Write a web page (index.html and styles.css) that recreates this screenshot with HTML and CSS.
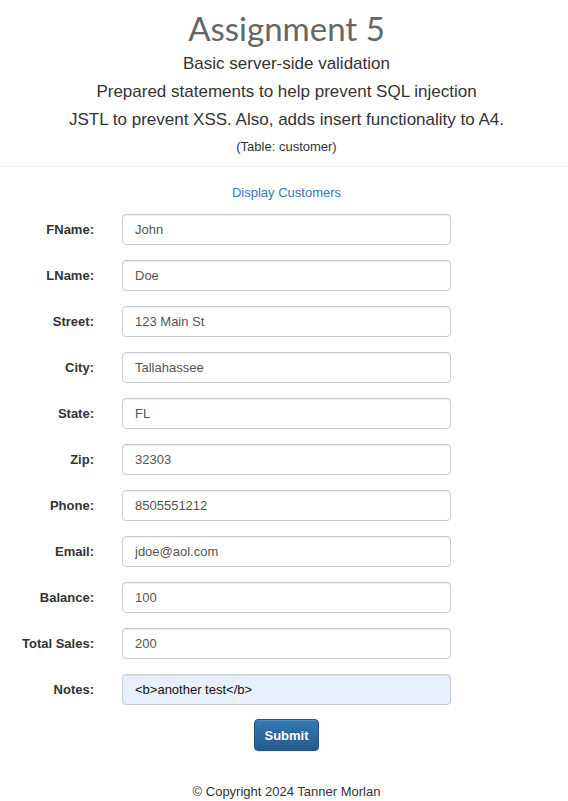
FILE: index.html
```html
<!DOCTYPE html>
<html lang="en">
<head>
<meta charset="utf-8">
<title>Assignment 5</title>
<link rel="stylesheet" href="styles.css">
</head>
<body>
<header class="header">
  <h1 class="title">Assignment 5</h1>
  <p class="sub">Basic server-side validation</p>
  <p class="sub">Prepared statements to help prevent SQL injection</p>
  <p class="sub">JSTL to prevent XSS. Also, adds insert functionality to A4.</p>
  <p class="table-note">(Table: customer)</p>
</header>
<hr class="divider">
<main class="main">
  <div class="link-row"><a class="link" href="#">Display Customers</a></div>
  <form class="form">
    <label class="lbl">FName:</label><input class="field" type="text" value="John">
    <label class="lbl">LName:</label><input class="field" type="text" value="Doe">
    <label class="lbl">Street:</label><input class="field" type="text" value="123 Main St">
    <label class="lbl">City:</label><input class="field" type="text" value="Tallahassee">
    <label class="lbl">State:</label><input class="field" type="text" value="FL">
    <label class="lbl">Zip:</label><input class="field" type="text" value="32303">
    <label class="lbl">Phone:</label><input class="field" type="text" value="8505551212">
    <label class="lbl">Email:</label><input class="field" type="text" value="jdoe@aol.com">
    <label class="lbl">Balance:</label><input class="field" type="text" value="100">
    <label class="lbl">Total Sales:</label><input class="field" type="text" value="200">
    <label class="lbl">Notes:</label><input class="field autofill" type="text" value="&lt;b&gt;another test&lt;/b&gt;">
  </form>
  <div class="btn-row"><button class="btn" type="button">Submit</button></div>
</main>
<footer class="footer">© Copyright 2024 Tanner Morlan</footer>
</body>
</html>
```
FILE: styles.css
```css
* { box-sizing: border-box; }
html, body { margin: 0; padding: 0; background: #fff; }
body {
  font-family: "Liberation Sans", Arial, sans-serif;
  font-size: 13px;
  color: #333;
  width: 568px;
}
.header {
  text-align: center;
  padding: 6px 0 0 5px;
}
.title {
  margin: 0;
  font-family: Lato, "Open Sans", sans-serif;
  font-weight: 400;
  font-size: 33px;
  line-height: 44px;
  color: #666;
}
.sub {
  margin: 0;
  font-size: 17px;
  line-height: 28px;
  color: #333;
}
.table-note {
  margin: 0;
  font-size: 13px;
  line-height: 26px;
  color: #333;
}
.divider {
  margin: 6px 0 0;
  border: 0;
  border-top: 1px solid #eee;
  height: 0;
}
.main { padding-top: 16px; }
.link-row {
  text-align: center;
  padding-left: 5px;
  line-height: 20px;
}
.link { color: #337ab7; text-decoration: none; font-size: 13px; }
.form {
  margin-top: 11px;
  display: grid;
  grid-template-columns: 94px 329px;
  column-gap: 28px;
  row-gap: 15px;
  align-items: center;
}
.lbl {
  text-align: right;
  font-weight: bold;
  font-size: 13px;
  color: #333;
}
.field {
  height: 31px;
  width: 329px;
  border: 1px solid #ccc;
  border-radius: 4px;
  box-shadow: inset 0 1px 1px rgba(0,0,0,.075);
  padding: 0 12px;
  font-family: "Liberation Sans", Arial, sans-serif;
  font-size: 13px;
  color: #555;
  background: #fff;
}
.field.autofill { background: #e8f0fe; color: #111; }
.btn-row {
  margin-top: 14px;
  text-align: center;
  padding-left: 5px;
}
.btn {
  width: 65px;
  height: 32px;
  border: 1px solid #245580;
  border-radius: 4px;
  background: linear-gradient(to bottom, #337ab7 0, #265a88 100%);
  color: #fff;
  font-family: "Liberation Sans", Arial, sans-serif;
  font-size: 13px;
  font-weight: bold;
  text-shadow: 0 -1px 0 rgba(0,0,0,.2);
  box-shadow: inset 0 1px 0 rgba(255,255,255,.15), 0 1px 1px rgba(0,0,0,.075);
  padding: 0;
}
.footer {
  margin-top: 31px;
  text-align: center;
  padding-left: 5px;
  line-height: 20px;
  font-size: 13px;
  color: #333;
}
```
